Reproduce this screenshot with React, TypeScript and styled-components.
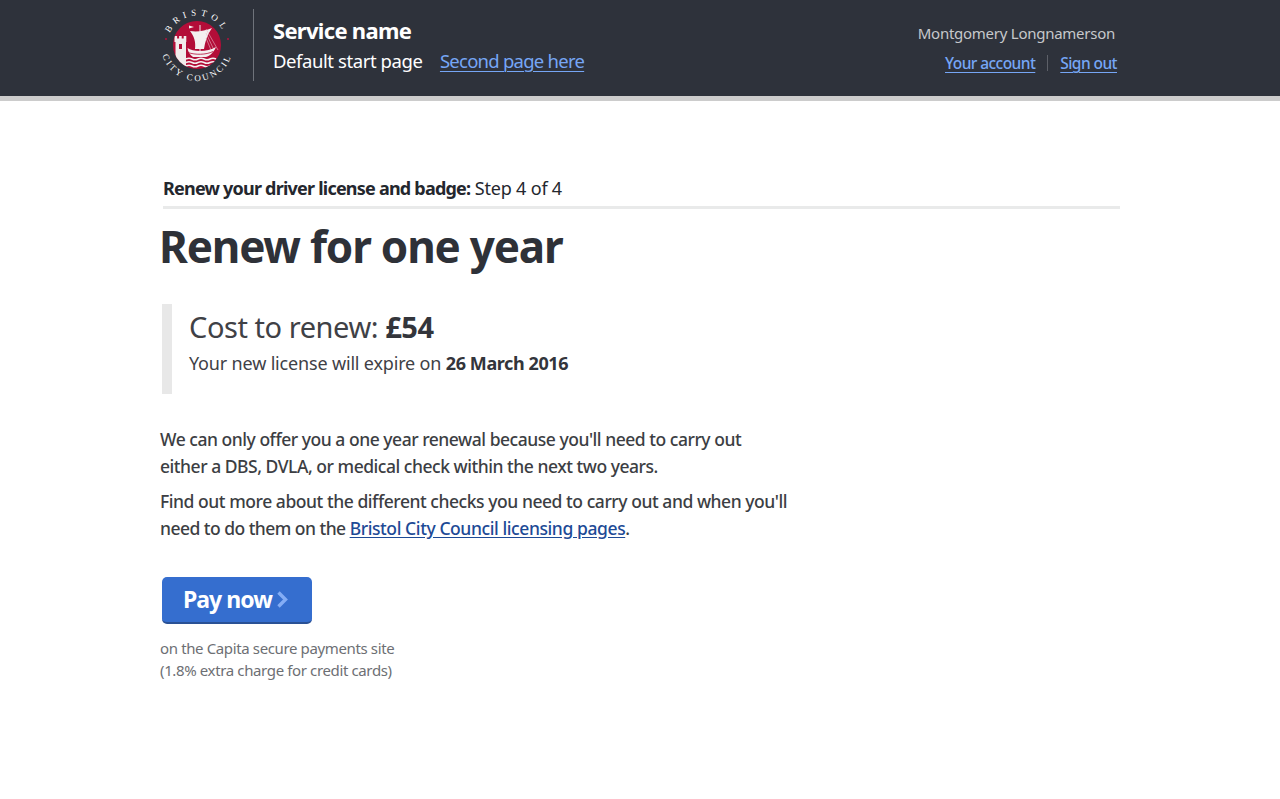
import React from "react";
import styled, { createGlobalStyle } from "styled-components";

const Global = createGlobalStyle`
  html, body { margin: 0; padding: 0; background: #fff; }
  body { font-family: "Noto Sans", "Open Sans", sans-serif; color: #2e3138; }
`;

const Page = styled.div`
  min-height: 799px;
  background: #fff;
`;

const Header = styled.header`
  height: 96px;
  background: #2e323b;
  border-bottom: 5px solid #cccccc;
  padding: 0 160px;
  display: flex;
  justify-content: space-between;
`;

const Brand = styled.div`
  display: flex;
  align-items: flex-start;
`;

const LogoBox = styled.div`
  width: 93px;
  height: 81px;
  padding-top: 9px;
  svg { display: block; overflow: visible; }
`;

const ServiceBlock = styled.div`
  border-left: 1px solid #6f737b;
  margin-top: 9px;
  height: 72px;
  padding-left: 19px;
`;

const ServiceName = styled.div`
  font-size: 22px;
  line-height: 28px;
  font-weight: 700;
  color: #fff;
  margin-top: 7px;
  letter-spacing: -0.7px;
`;

const ServiceNav = styled.div`
  display: flex;
  gap: 17.5px;
  margin-top: 2px;
  font-size: 18.5px;
  line-height: 30px;
  letter-spacing: -0.42px;
  color: #fff;
`;

const HeaderLink = styled.a`
  color: #76a6f5;
  text-decoration: underline;
  text-underline-offset: 3px;
  text-decoration-thickness: 1px;
`;

const SecondLink = styled(HeaderLink)`
  letter-spacing: -0.75px;
`;

const Account = styled.div`
  width: 220px;
  color: #c6c8cb;
  padding-right: 3px;
`;

const UserName = styled.div`
  font-size: 15px;
  line-height: 24px;
  margin-top: 21px;
  padding-right: 2px;
  text-align: right;
  white-space: nowrap;
  letter-spacing: -0.26px;
`;

const AccountLinks = styled.div`
  display: flex;
  justify-content: flex-end;
  align-items: center;
  font-size: 15.5px;
  line-height: 24px;
  font-weight: 500;
  letter-spacing: -0.56px;
  margin-top: 6px;
  white-space: nowrap;
`;

const Divider = styled.span`
  width: 1px;
  height: 16px;
  background: #5d6068;
  margin: 0 12px;
`;

const Main = styled.main`
  padding: 0 160px;
  width: 960px;
`;

const StepLine = styled.div`
  margin: 75px 0 0 3px;
  width: 957px;
  height: 33px;
  box-sizing: border-box;
  border-bottom: 3px solid #e9eaea;
  font-size: 18px;
  line-height: 24px;
  letter-spacing: -0.2px;
  color: #24272e;
  white-space: nowrap;
  b { font-weight: 700; letter-spacing: -0.78px; }
`;

const Title = styled.h1`
  margin: 7px 0 0 -1px;
  font-size: 44px;
  line-height: 60px;
  font-weight: 700;
  letter-spacing: -1.2px;
  color: #2e3138;
  white-space: nowrap;
`;

const Callout = styled.section`
  margin: 28px 0 0 2px;
  height: 90px;
  box-sizing: border-box;
  border-left: 10px solid #e8e8e8;
  padding: 4px 0 0 17px;
  color: #3f4146;
  white-space: nowrap;
`;

const Cost = styled.div`
  font-size: 29px;
  line-height: 38px;
  letter-spacing: -0.45px;
  b { font-weight: 700; color: #33353b; }
`;

const Expiry = styled.div`
  font-size: 18px;
  line-height: 28px;
  margin-top: 3px;
  letter-spacing: -0.17px;
  b { font-weight: 700; color: #33353b; letter-spacing: -0.4px; }
`;

const Body = styled.p`
  margin: 0;
  font-size: 17.5px;
  line-height: 27px;
  letter-spacing: -0.47px;
  color: #3c3e43;
  font-weight: 500;
  white-space: nowrap;
`;

const First = styled(Body)`
  margin-top: 32px;
`;

const Second = styled(Body)`
  margin-top: 8px;
  letter-spacing: -0.45px;
`;

const LinkLead = styled.span`
  letter-spacing: -0.53px;
`;

const InlineLink = styled.a`
  color: #1d4a96;
  letter-spacing: -0.41px;
  text-decoration: underline;
  text-underline-offset: 2px;
`;

const PayButton = styled.button`
  margin: 35px 0 0 2px;
  width: 150px;
  height: 47px;
  border: 0;
  border-bottom: 2px solid #2a5195;
  border-radius: 5px;
  background: #356ecf;
  color: #fff;
  font-family: inherit;
  font-size: 23px;
  font-weight: 700;
  letter-spacing: -0.95px;
  padding: 0 2px 1px 0;
  display: flex;
  align-items: center;
  justify-content: center;
  gap: 4px;
`;

const Note = styled.p`
  margin: 13px 0 0;
  font-size: 15px;
  line-height: 22px;
  letter-spacing: -0.37px;
  color: #6d6f74;
  white-space: nowrap;
`;

const Logo = () => (
  <svg width="76" height="76" viewBox="0 0 76 76" aria-label="Bristol City Council">
    <defs>
      <path id="arcTop" d="M7.5 36 A29.5 29.5 0 0 1 66.5 36" />
      <path id="arcBottom" d="M1 36 A36 36 0 0 0 73 36" />
      <clipPath id="seal"><circle cx="37" cy="36" r="24" /></clipPath>
    </defs>
    <text fontFamily="Liberation Serif, serif" fontSize="9" fill="#ffffff" letterSpacing="4.4" textAnchor="middle">
      <textPath href="#arcTop" startOffset="50%">BRISTOL</textPath>
    </text>
    <text fontFamily="Liberation Serif, serif" fontSize="9" fill="#ffffff" letterSpacing="2.4" textAnchor="middle">
      <textPath href="#arcBottom" startOffset="50%">CITY COUNCIL</textPath>
    </text>
    <circle cx="6" cy="30" r="1" fill="#b5123e" />
    <circle cx="68" cy="30" r="1" fill="#b5123e" />
    <circle cx="37" cy="36" r="24" fill="#b30d38" />
    <g clipPath="url(#seal)">
      <path d="M15.5 32h10.5v26H15.5z" fill="#f1ecec" />
      <path d="M14.5 27h2.6v2.5h2v-2.5h2.6v2.5h2v-2.5h2.6v6h-11.8z" fill="#f1ecec" />
      <path d="M19 35h3v5h-3z" fill="#b30d38" />
      <path d="M29 16.5 l5 1.5 l-5 1.5z" fill="#f4f0f0" />
      <path d="M30 22 C37 23 45 22 52 19 C47 26 45 33 44 40 L35 40 C36 33 34 27 30 22z" fill="#f4f0f0" />
      <path d="M39.5 16h1v26h-1z" fill="#f4f0f0" />
      <path d="M46 20l12 21M46 24l8 17M46 29l5 12" stroke="#eab9c6" strokeWidth="0.6" fill="none" />
      <path d="M27.5 39 C33 43 48 43 56 38 C54 43 50 47 46 48 H33 C30 46 28 43 27.5 39z" fill="#f4f0f0" />
      <path d="M28 43.5 C35 46 46 46 53 42.5" stroke="#b30d38" strokeWidth="0.8" fill="none" />
      <path d="M26 50 q3 -1.6 6 0 t6 0 t6 0 t6 0 t6 0 M26 53.5 q3 -1.6 6 0 t6 0 t6 0 t6 0 t6 0 M26 57 q3 -1.6 6 0 t6 0 t6 0 t6 0 t6 0" stroke="#f4f0f0" strokeWidth="1.5" fill="none" />
    </g>
  </svg>
);

const Chevron = () => (
  <svg width="13" height="17" viewBox="0 0 13 17" aria-hidden="true">
    <path d="M2.5 1.5l7 7-7 7" stroke="#84adf5" strokeWidth="3.4" fill="none" />
  </svg>
);

export default function App() {
  return (
    <Page>
      <Global />
      <Header>
        <Brand>
          <LogoBox><Logo /></LogoBox>
          <ServiceBlock>
            <ServiceName>Service name</ServiceName>
            <ServiceNav>
              <span>Default start page</span>
              <SecondLink href="#">Second page here</SecondLink>
            </ServiceNav>
          </ServiceBlock>
        </Brand>
        <Account>
          <UserName>Montgomery Longnamerson</UserName>
          <AccountLinks>
            <HeaderLink href="#">Your account</HeaderLink>
            <Divider />
            <HeaderLink href="#">Sign out</HeaderLink>
          </AccountLinks>
        </Account>
      </Header>
      <Main>
        <StepLine><b>Renew your driver license and badge:</b> Step 4 of 4</StepLine>
        <Title>Renew for one year</Title>
        <Callout>
          <Cost>Cost to renew: <b>£54</b></Cost>
          <Expiry>Your new license will expire on <b>26 March 2016</b></Expiry>
        </Callout>
        <First>We can only offer you a one year renewal because you'll need to carry out<br />either a DBS, DVLA, or medical check within the next two years.</First>
        <Second>Find out more about the different checks you need to carry out and when you'll<br /><LinkLead>need to do them on the </LinkLead><InlineLink href="#">Bristol City Council licensing pages</InlineLink>.</Second>
        <PayButton>Pay now <Chevron /></PayButton>
        <Note>on the Capita secure payments site<br />(1.8% extra charge for credit cards)</Note>
      </Main>
    </Page>
  );
}
